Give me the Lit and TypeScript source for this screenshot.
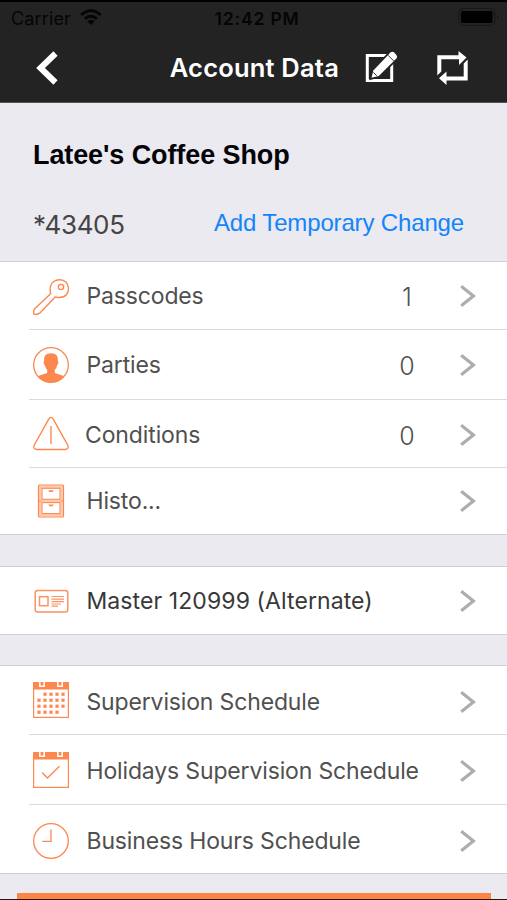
import { LitElement, html, css, svg, nothing } from "lit";
import { customElement, property } from "lit/decorators.js";

type IconName =
  | "key" | "person" | "warning" | "cabinet" | "card" | "calendar" | "calendarCheck" | "clock";

interface Item {
  icon: IconName;
  label: string;
  cls: string;
  count?: string;
}

const sections: Item[][] = [
  [
    { icon: "key", label: "Passcodes", cls: "h67 icon-low", count: "1" },
    { icon: "person", label: "Parties", cls: "h69", count: "0" },
    { icon: "warning", label: "Conditions", cls: "h67 nudge text-low", count: "0" },
    { icon: "cabinet", label: "Histo...", cls: "h66" },
  ],
  [{ icon: "card", label: "Master 120999 (Alternate)", cls: "h67 dark" }],
  [
    { icon: "calendar", label: "Supervision Schedule", cls: "h68 text-lower" },
    { icon: "calendarCheck", label: "Holidays Supervision Schedule", cls: "h69 text-low" },
    { icon: "clock", label: "Business Hours Schedule", cls: "h68 text-lower icon-low" },
  ],
];

const dots = [
  [12, 18, 24, 30],
  [6, 12, 18, 24, 30],
  [6, 12, 18, 24, 30],
  [6, 12, 18, 24],
];

const calendarFrame = svg`
  <rect x="0.6" y="0.6" width="34.8" height="34.8" fill="none" stroke="currentColor" stroke-width="1.2"/>
  <rect width="36" height="7.5" fill="currentColor"/>
  <path d="M6.8 0v4.2h4.4V0M24.8 0v4.2h4.4V0" fill="none" stroke="#fff" stroke-width="1.5"/>`;

const icons = {
  key: svg`<g fill="none" stroke="currentColor" stroke-width="1.4" stroke-linejoin="round">
    <path d="M1.2 30.2 17.6 14.8C16.4 8.5 17.6 4.7 20.4 2.7 24.3-.1 29.6.1 32.9 3.1 36.1 6.4 36.4 11.8 33.6 15.5 31 18.400 27.200 19.200 22.200 18L7.400 33.600Q5 35.600 .9 35.300Q.2 33 1.200 30.200Z"/>
    <circle cx="28" cy="8" r="2.6"/></g>`,
  person: svg`<circle cx="18" cy="18" r="17.3" fill="none" stroke="currentColor" stroke-width="1.3"/>
    <path fill="currentColor" d="M18 6.300c5.200 0 7.300 2.900 6.800 7.500.9.300.8 3.500-.7 4.400-.4 2-1.300 3.500-2.300 4.500v3c1.500 1.400 6.300 1.600 9.400 3.700A17.500 17.500 0 0 1 4.800 29.400c3.100-2.100 7.900-2.300 9.400-3.700v-3c-1-1-1.900-2.500-2.300-4.500-1.500-.9-1.600-4.100-.7-4.400-.5-4.600 1.600-7.500 6.800-7.500Z"/>`,
  warning: svg`<g fill="none" stroke="currentColor" stroke-width="1.4">
    <path d="M15.6 3.4Q18-.6 20.4 3.4L34.8 29.2Q36.2 33.1 32.4 33.5H3.6Q-.2 33.1 1.2 29.2Z"/>
    <path d="M18 10v18"/></g>`,
  cabinet: svg`<rect x="5.5" y="2" width="25" height="32" rx="1" fill="none" stroke="currentColor" stroke-width="1.2"/>
    <rect x="7.3" y="3.8" width="21.4" height="28.4" fill="none" stroke="currentColor" stroke-width="2.4" opacity=".45"/>
    <g fill="none" stroke="currentColor" stroke-width="1.1">
    <rect x="9" y="5.3" width="18" height="11"/><rect x="9" y="19.6" width="18" height="11"/>
    <path d="M6 18h24" opacity=".8"/></g>
    <path d="M15.3 7.3h5.4l-1 1.7h-3.4ZM15.3 21.6h5.4l-1 1.7h-3.4Z" fill="currentColor"/>`,
  card: svg`<g fill="none" stroke="currentColor" stroke-width="1.5" opacity=".9">
    <rect x="2.2" y="7.5" width="32.6" height="21.5" rx="2.5"/>
    <rect x="6.5" y="13.7" width="8.5" height="9"/>
    <path d="M18.5 13.5h12.5M18.5 16.2h12.5M18.5 18.7h12.5M18.5 21h9.5M18.5 23.2h6.5" stroke-width="1.2"/></g>`,
  calendar: svg`${calendarFrame}${dots.map((row, r) =>
    row.map((x) => svg`<rect x=${x - 1.6} y=${10.6 + r * 6} width="3.2" height="3.2" fill="currentColor"/>`)
  )}`,
  calendarCheck: svg`${calendarFrame}
    <path d="M9 20.5 14.5 26 26.5 14.3" fill="none" stroke="currentColor" stroke-width="1.4"/>`,
  clock: svg`<g fill="none" stroke="currentColor" stroke-width="1.3">
    <circle cx="18" cy="18" r="17.3"/><path d="M18 6.5V18.4H9.3"/></g>`,
};

@customElement("menu-row")
class MenuRow extends LitElement {
  @property({ attribute: false }) item!: Item;

  static styles = css`
    :host { display: block; }
    .row {
      box-sizing: border-box;
      display: flex;
      align-items: center;
      padding: 0 31px 0 33px;
      color: #505050;
    }
    .h66 { height: 66px; }
    .h67 { height: 67px; }
    .h68 { height: 68px; }
    .h69 { height: 69px; }
    .icon { width: 36px; height: 36px; flex: none; overflow: visible; color: #fc8850; }
    .label {
      flex: 1;
      margin-left: 17.5px;
      font-size: 23px;
      line-height: 28px;
      letter-spacing: -0.15px;
      white-space: nowrap;
    }
    .nudge .label { margin-left: 16px; letter-spacing: -0.12px; }
    .dark .label { color: #383838; letter-spacing: 0.09px; }
    .count {
      width: 30px;
      margin-right: 38px;
      padding-top: 2px;
      text-align: center;
      font-size: 25px;
      line-height: 28px;
      font-weight: 300;
    }
    .chevron { width: 16px; height: 24px; flex: none; }
    .icon-low .icon { padding-top: 3px; }
    .text-low .label, .text-low .chevron { padding-top: 2px; }
    .text-low .count { padding-top: 4px; }
    .text-lower .label, .text-lower .chevron { padding-top: 4px; }
  `;

  render() {
    const { icon, label, cls, count } = this.item;
    return html`<div class="row ${cls}">
      <svg class="icon" viewBox="0 0 36 36">${icons[icon]}</svg>
      <span class="label">${label}</span>
      ${count ? html`<span class="count">${count}</span>` : nothing}
      <svg class="chevron" viewBox="0 0 16 24">
        <path d="M1.2 2.3 13.4 12 1.2 21.7" fill="none" stroke="#adadad" stroke-width="3.2"/>
      </svg>
    </div>`;
  }
}

@customElement("app-root")
class AppRoot extends LitElement {
  static styles = css`
    :host {
      display: block;
      box-sizing: border-box;
      height: 900px;
      overflow: hidden;
      background: #eaeaf0;
      font-family: Inter, "Noto Sans", sans-serif;
    }
    .header {
      box-sizing: border-box;
      height: 103px;
      border-top: 2px solid #000;
      border-bottom: 1px solid #555;
      background: #232323;
    }
    .status {
      display: grid;
      grid-template-columns: 1fr auto 1fr;
      align-items: center;
      height: 32px;
      padding: 0 8px 0 11px;
      color: #050505;
      font-size: 18px;
    }
    .carrier { display: flex; align-items: center; gap: 9px; letter-spacing: 0.15px; }
    .time { font-weight: 600; font-size: 17.5px; letter-spacing: 0.85px; padding-left: 4px; }
    .wifi { width: 22px; height: 16px; margin-top: -2px; }
    .battery { width: 41px; height: 20px; justify-self: end; margin-top: -2px; }
    .nav { display: flex; align-items: center; height: 68px; padding: 0 37px 0 36px; color: #fff; }
    .back { width: 22px; height: 36px; }
    .title {
      flex: 1;
      text-align: right;
      margin: 0;
      font-size: 25.5px;
      line-height: 30px;
      font-weight: 600;
      letter-spacing: 0.2px;
      white-space: nowrap;
    }
    .edit { width: 34px; height: 34px; margin-left: 24px; overflow: visible; }
    .swap { width: 34px; height: 36px; margin-left: 38px; margin-right: 1px; }
    .account { box-sizing: border-box; height: 158px; padding: 37px 43px 0 33px; }
    .name {
      margin: 0;
      font: bold 27px/31px "Liberation Sans", sans-serif;
      letter-spacing: -0.1px;
      color: #050508;
      white-space: nowrap;
    }
    .meta { display: flex; justify-content: space-between; align-items: baseline; margin-top: 37px; }
    .number { font-size: 26px; line-height: 34px; letter-spacing: -0.35px; color: #444; }
    .change {
      font: 24px/30px "Liberation Sans", sans-serif;
      letter-spacing: -0.15px;
      color: #1484fa;
      position: relative;
      top: -3px;
    }
    .section {
      border-top: 1px solid #d0d0d3;
      border-bottom: 1px solid #d0d0d3;
      background: #fff;
      margin-bottom: 30px;
    }
    .section:first-of-type { margin-bottom: 31px; }
    .section.last { margin-bottom: 19px; }
    .line { height: 1px; margin-left: 29px; background: #dadadc; }
    .button { height: 6px; margin: 0 16px 0 17px; background: #fc8445; }
    .edge { height: 1px; background: #26150f; }
  `;

  render() {
    return html`
      <header class="header">
        <div class="status">
          <span class="carrier">Carrier
            <svg class="wifi" viewBox="0 0 22 16">
              <g fill="none" stroke="currentColor" stroke-width="2.8">
                <path d="M1.2 6Q11-2.8 20.8 6M5 9.8Q11 4.6 17 9.8"/></g>
              <path d="M7.3 12.2Q11 9.2 14.7 12.2L11 16Z" fill="currentColor"/>
            </svg>
          </span>
          <span class="time">12:42 PM</span>
          <svg class="battery" viewBox="0 0 41 20">
            <rect x=".8" y="1.5" width="36" height="17" rx="4.5" fill="none" stroke="#181818" stroke-width="1.2"/>
            <rect x="3" y="4" width="31.5" height="12" rx="1.5" fill="#000"/>
            <path d="M39 7.5q3 2.5 0 5Z" fill="#141414"/>
          </svg>
        </div>
        <nav class="nav">
          <svg class="back" viewBox="0 0 22 36">
            <path d="M19.5 3.5 4.5 18 19.5 32.5" fill="none" stroke="currentColor" stroke-width="6"/>
          </svg>
          <h1 class="title">Account Data</h1>
          <svg class="edit" viewBox="0 0 34 34">
            <path d="M4.3 4.600H28.700V29.500H4.300Z" fill="none" stroke="currentColor" stroke-width="3"/>
            <path d="m8.500 26.800 1.800-7.300L27.500 1.600q1.900-1.700 3.600 0l2.300 2.300q1.600 1.800 0 3.600L15.800 25Z"
              fill="currentColor" stroke="#232323" stroke-width="3.500" paint-order="stroke"/>
            <path d="m25 4.200 5.900 5.900M10.300 21.300l3.400 3.400" stroke="#232323" stroke-width=".9"/>
          </svg>
          <svg class="swap" viewBox="0 0 34 36">
            <path fill="currentColor" d="M2.300 25.500V5.200H23.500V1L31.500 7.400 24 15V9.200H6.300V21.500ZM32.700 9.500V30.600H11.500V35L4 28.300 11.500 21.500V26.600H28.700V13.500Z"/>
          </svg>
        </nav>
      </header>
      <section class="account">
        <h2 class="name">Latee's Coffee Shop</h2>
        <div class="meta">
          <span class="number">*43405</span>
          <span class="change">Add Temporary Change</span>
        </div>
      </section>
      ${sections.map((items, s) => html`<div class="section ${s === sections.length - 1 ? "last" : ""}">
        ${items.map((item, i) => html`
          ${i ? html`<div class="line"></div>` : nothing}
          <menu-row .item=${item}></menu-row>`)}
      </div>`)}
      <div class="button"></div>
      <div class="edge"></div>
    `;
  }
}
